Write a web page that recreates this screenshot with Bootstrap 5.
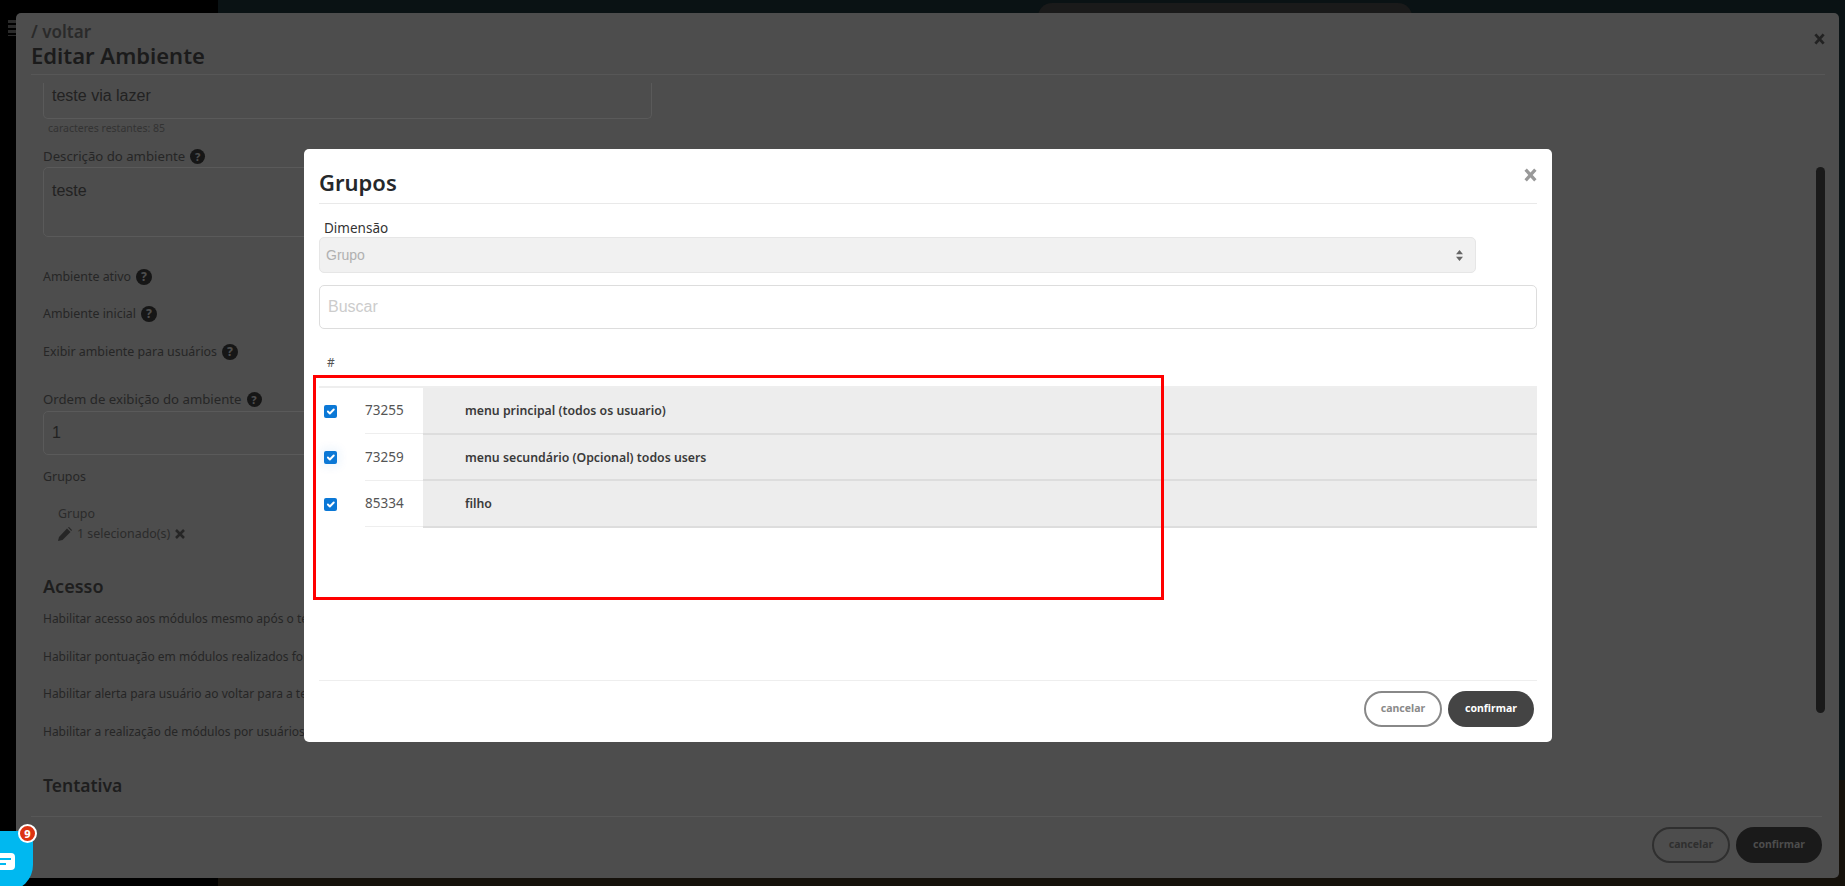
<!doctype html>
<html lang="pt-BR">
<head>
<meta charset="utf-8">
<title>Editar Ambiente</title>
<link href="https://cdn.jsdelivr.net/npm/bootstrap@5.3.0/dist/css/bootstrap.min.css" rel="stylesheet">
<style>
html,body{height:100%;overflow:hidden}
body{font-family:"Noto Sans","Liberation Sans",sans-serif;background:#000;color:#222;position:relative}
.shell{height:886px}
.side-dark{width:218px;background:#000}
.top-dark{background:#0a1214;height:780px;padding:3px 0 0 820px}
.bot-dark{background:#15110b;height:106px}
.ghost-search{width:374px;height:30px;background:#1a1a1a;border-radius:14px}
.ghost-dot{width:22px;height:22px;background:#000;border-radius:50%;margin-top:10px}
.outer-win{position:absolute;left:16px;top:13px;width:1823px;height:865px;background:#4d4d4d;border-radius:5px;overflow:hidden}
.outer-head{height:62px;margin:0 14px 0 15px;border-bottom:1px solid #575757;position:relative}
.back-link{font-size:17px;font-weight:600;line-height:19px;padding-top:9px;color:#2a2a2a}
.page-title{font-size:22px;font-weight:600;line-height:28px;color:#1b1b1b;margin:0}
.outer-x{position:absolute;right:0;top:20px;width:11px;height:12px;color:#222}
.outer-body{height:748px;overflow:hidden;padding-left:27px;margin-top:8px;font-size:13.2px;color:#262626}
.ghost-input{width:609px;border:1px solid #5a5a5a;border-radius:5px;font-family:"Liberation Sans",sans-serif;font-size:16px;padding:0 8px;color:#222;background:#4d4d4d}
.name-input{height:36px;line-height:26px;border-top:0;border-radius:0 0 5px 5px}
.hint{font-size:10.5px;color:#333;margin:2px 0 0 5px;line-height:14px}
.lab{display:flex;align-items:center;gap:5px;line-height:18px}
.lab-desc{margin-top:12px}
.desc-area{height:70px;margin-top:2px;padding-top:11px}
.sw1,.sw2,.sw3,.grp-lab,.grp-box{font-size:12.4px}
.sw1{margin-top:31px}
.sw2{margin-top:19px}
.sw3{margin-top:20px}
.lab-ord{margin-top:29px}
.ord-input{height:44px;margin-top:3px;line-height:42px;font-size:16px}
.hlp{display:inline-flex;width:15px;height:15px;border-radius:50%;background:#161616;color:#4d4d4d;font-size:11px;font-weight:800;align-items:center;justify-content:center;line-height:1;flex:none}
.sw1 .hlp,.sw2 .hlp,.sw3 .hlp{width:16px;height:16px;font-size:12px}
.grp-lab{margin-top:13px}
.grp-box{padding:18px 0 0 15px;line-height:20px;color:#2b2b2b}
.grp-sel{display:flex;align-items:center;gap:5px}
.sect-h{font-size:18px;font-weight:600;color:#1e1e1e;margin:0;line-height:24px}
.sect-a{margin-top:30px}
.acc-line{font-size:12px;line-height:18px;margin-top:20px;white-space:nowrap}
.acc-first{margin-top:12px}
.acc-third{margin-top:19px}
.sect-t{margin-top:31.500px;font-size:17.500px}
.outer-foot{position:absolute;left:15px;right:17px;top:803px;border-top:1px solid #575757;padding-top:10px;justify-content:flex-end;gap:6px}
.pill{height:36px;border-radius:18px;font-size:10.500px;font-weight:700;padding:0;display:flex;align-items:center;justify-content:center;font-family:"Noto Sans",sans-serif}
.pill-c{width:78px}
.pill-o{width:86px}
.outer-foot .pill-c{border:2px solid #2f2f2f;color:#2f2f2f;background:transparent}
.outer-foot .pill-o{border:0;background:#1a1a1a;color:#4d4d4d}
.scroll-th{position:absolute;left:1800px;top:154px;width:9px;height:546px;background:#1a1a1a;border-radius:5px}
.ghost-logo{position:absolute;left:8px;top:20px;width:8px;height:16px;background:repeating-linear-gradient(#2a2a2a 0 3px,#000 3px 5px)}

.inner-win{position:absolute;left:304px;top:149px;width:1248px;height:593px;background:#fff;border-radius:5px;padding:0 15px;color:#212529}
.inner-head{height:55px;border-bottom:1px solid #e9e9e9;position:relative}
.inner-title{font-size:22px;font-weight:600;line-height:32px;margin:0;padding-top:17px;color:#25282b}
.inner-x{position:absolute;right:0;top:19px;width:13px;height:14px;color:#999}
.dim-lab{font-size:13.500px;line-height:18px;margin:15px 0 0 5px;color:#333;display:block}
.dim-sel{width:1157px;height:36px;background-color:#f1f1f1;border:1px solid #e6e6e6;border-radius:5px;font-family:"Liberation Sans",sans-serif;font-size:14px;color:#aaa;padding:0 6px;background-image:url("data:image/svg+xml,%3Csvg xmlns='http://www.w3.org/2000/svg' width='8' height='13'%3E%3Cpath d='M4 0l4 5H0zM4 13L0 8h8z' fill='%23666'/%3E%3C/svg%3E");background-size:7px 11px;background-position:right 12px center}
.dim-sel:disabled{background-color:#f1f1f1;color:#b0b0b0;opacity:1}
.find-input{height:44px;margin-top:12px;border:1.500px solid #ddd;border-radius:5px;font-family:"Liberation Sans",sans-serif;font-size:16px;padding:0 8px}
.find-input::placeholder{color:#ccc}
.grp-table{margin:23px 0 0;table-layout:fixed;width:100%;border-collapse:collapse}
.grp-table th{height:35px;padding:1px 0 0 8px;font-size:12px;font-weight:400;color:#555;border-bottom:2px solid #eee;vertical-align:top;line-height:20px;box-shadow:none}
.grp-table td{height:46.500px;padding:0;vertical-align:middle;box-shadow:none;border:0}
.col-ck{width:46px}
.col-id{width:58px}
.grp-table td.cell-ck{padding:2px 0 0 5px}
.grp-table td.cell-id{font-size:13.500px;color:#555;border-bottom:1px solid #eee}
.grp-table td.cell-name{background:#ededed;border-bottom:2px solid #ddd;font-size:12.300px;font-weight:600;color:#3a3a3a;padding:2px 0 0 42px}
.form-check-input.tick{width:13px;height:13px;margin:0;display:block;border-radius:2px;border:0}
.tick:checked{background-color:#0b78d6}
.tick-glow{box-shadow:0 0 8px 4px rgba(11,120,214,.06)}
.inner-foot{position:absolute;left:15px;right:15px;top:531px;border-top:1px solid #eee;padding:10px 3px 0 0;justify-content:flex-end;gap:6px}
.inner-foot .pill-c{border:2px solid #888;color:#8a8a8a;background:#fff}
.inner-foot .pill-o{border:0;background:#444;color:#fff}
.red-mark{position:absolute;left:313px;top:375px;width:851px;height:225px;border:3px solid #f00;pointer-events:none}
.chat-tab{position:absolute;left:0;top:831px;width:33px;height:60px;background:#00b8f0;border-radius:0 9px 26px 0}
.chat-bub{position:absolute;left:-4px;top:22px;width:19px;height:17px;background:#fff;border-radius:4px;display:flex;flex-direction:column;justify-content:center;gap:3px;align-items:flex-start}
.chat-bub i{display:block;height:2px;background:#00b8f0}
.chat-bub i:first-child{width:15px}
.chat-bub i:last-child{width:10px}
.chat-badge{position:absolute;left:18px;top:824px;width:19px;height:19px;border-radius:50%;background:#dc3312;border:2px solid #fff;color:#fff;font-size:11px;font-weight:800;display:flex;align-items:center;justify-content:center;line-height:1}
</style>
</head>
<body>
<div class="shell d-flex">
  <div class="side-dark flex-shrink-0"></div>
  <div class="flex-grow-1">
    <div class="top-dark d-flex gap-2">
      <div class="ghost-search"></div>
      <div class="ghost-dot ms-2"></div><div class="ghost-dot"></div><div class="ghost-dot"></div>
    </div>
    <div class="bot-dark"></div>
  </div>
</div>
<div class="ghost-logo"></div>

<div class="outer-win">
  <div class="outer-head">
    <div class="back-link">/ voltar</div>
    <h1 class="page-title">Editar Ambiente</h1>
    <svg class="outer-x" viewBox="0 0 12 13"><path d="M1.500 1.500l9 10M10.500 1.500l-9 10" stroke="currentColor" stroke-width="3" fill="none"/></svg>
  </div>
  <div class="outer-body">
    <div class="ghost-input name-input">teste via lazer</div>
    <div class="hint">caracteres restantes: 85</div>
    <div class="lab lab-desc">Descrição do ambiente <span class="hlp">?</span></div>
    <div class="ghost-input desc-area">teste</div>
    <div class="lab sw1">Ambiente ativo <span class="hlp">?</span></div>
    <div class="lab sw2">Ambiente inicial <span class="hlp">?</span></div>
    <div class="lab sw3">Exibir ambiente para usuários <span class="hlp">?</span></div>
    <div class="lab lab-ord">Ordem de exibição do ambiente <span class="hlp">?</span></div>
    <div class="ghost-input ord-input">1</div>
    <div class="lab grp-lab">Grupos</div>
    <div class="grp-box">
      <div>Grupo</div>
      <div class="grp-sel">
        <svg width="14" height="14" viewBox="0 0 14 14"><path d="M0 14l1-4 8-8.500 3.500 3.500-8 8zM10 .6l1-.6 3 3-.7 1z" fill="#262626"/></svg>
        <span>1 selecionado(s)</span>
        <svg width="10" height="10" viewBox="0 0 10 10"><path d="M1 1l8 8M9 1l-8 8" stroke="#262626" stroke-width="2.500"/></svg>
      </div>
    </div>
    <h2 class="sect-h sect-a">Acesso</h2>
    <div class="acc-line acc-first">Habilitar acesso aos módulos mesmo após o término</div>
    <div class="acc-line">Habilitar pontuação em módulos realizados fora do prazo</div>
    <div class="acc-line acc-third">Habilitar alerta para usuário ao voltar para a tela</div>
    <div class="acc-line">Habilitar a realização de módulos por usuários</div>
    <h2 class="sect-h sect-t">Tentativa</h2>
  </div>
  <div class="scroll-th"></div>
  <div class="outer-foot d-flex">
    <button class="btn pill pill-c" type="button">cancelar</button>
    <button class="btn pill pill-o" type="button">confirmar</button>
  </div>
</div>

<div class="inner-win">
  <div class="inner-head">
    <h2 class="inner-title">Grupos</h2>
    <svg class="inner-x" viewBox="0 0 12 13"><path d="M1.500 1.500l9 10M10.500 1.500l-9 10" stroke="currentColor" stroke-width="3" fill="none"/></svg>
  </div>
  <label class="dim-lab" for="dimSel">Dimensão</label>
  <select class="form-select dim-sel" id="dimSel" disabled><option>Grupo</option></select>
  <input class="form-control find-input" type="text" placeholder="Buscar">
  <table class="table grp-table">
    <colgroup><col class="col-ck"><col class="col-id"><col></colgroup>
    <thead><tr><th colspan="3">#</th></tr></thead>
    <tbody>
      <tr><td class="cell-ck"><input class="form-check-input tick" type="checkbox" checked aria-label="73255"></td><td class="cell-id">73255</td><td class="cell-name">menu principal (todos os usuario)</td></tr>
      <tr><td class="cell-ck"><input class="form-check-input tick tick-glow" type="checkbox" checked aria-label="73259"></td><td class="cell-id">73259</td><td class="cell-name">menu secundário (Opcional) todos users</td></tr>
      <tr><td class="cell-ck"><input class="form-check-input tick" type="checkbox" checked aria-label="85334"></td><td class="cell-id">85334</td><td class="cell-name">filho</td></tr>
    </tbody>
  </table>
  <div class="inner-foot d-flex">
    <button class="btn pill pill-c" type="button">cancelar</button>
    <button class="btn pill pill-o" type="button">confirmar</button>
  </div>
</div>

<div class="red-mark"></div>

<div class="chat-tab"><div class="chat-bub"><i></i><i></i></div></div>
<div class="chat-badge">9</div>
<script src="https://cdn.jsdelivr.net/npm/bootstrap@5.3.0/dist/js/bootstrap.bundle.min.js"></script>
</body>
</html>
